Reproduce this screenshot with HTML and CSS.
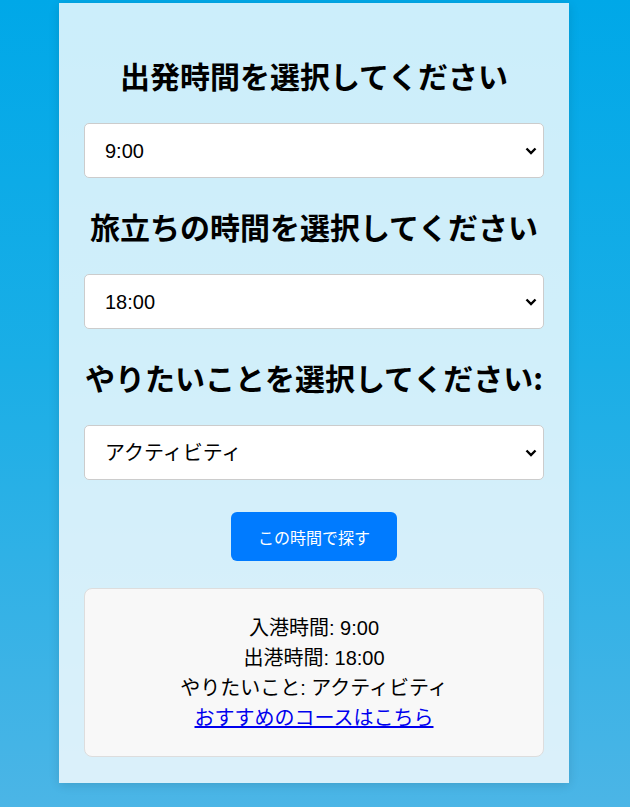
FILE: index.html
```html
<!DOCTYPE html>
<html lang="ja">
<head>
<meta charset="UTF-8">
<title>時間選択</title>
<link rel="stylesheet" href="styles.css">
</head>
<body>
<main class="card">
  <h2 class="title">出発時間を選択してください</h2>
  <select class="picker">
    <option>9:00</option>
  </select>
  <h2 class="title">旅立ちの時間を選択してください</h2>
  <select class="picker">
    <option>18:00</option>
  </select>
  <h2 class="title">やりたいことを選択してください:</h2>
  <select class="picker">
    <option>アクティビティ</option>
  </select>
  <div class="actions">
    <button class="search">この時間で探す</button>
  </div>
  <div class="result">
    <div class="line">入港時間: 9:00</div>
    <div class="line">出港時間: 18:00</div>
    <div class="line">やりたいこと: アクティビティ</div>
    <div class="line"><a class="link" href="#">おすすめのコースはこちら</a></div>
  </div>
</main>
</body>
</html>
```
FILE: styles.css
```css
html, body {
  margin: 0;
  padding: 0;
}
body {
  min-height: 807px;
  background: linear-gradient(to bottom, #00a8e8 0%, #1aaee6 45%, #4bb5e6 100%);
  font-family: "Liberation Sans", "Noto Sans CJK JP", sans-serif;
  color: #000;
}
.card {
  box-sizing: border-box;
  width: 510px;
  margin: 3px 0 0 calc(50% - 256px);
  padding: 24px 25px 26px;
  background: rgba(255, 255, 255, 0.8);
  box-shadow: 0 2px 10px rgba(0, 0, 0, 0.12);
  display: flex;
  flex-direction: column;
}
.title {
  margin: 30px 0;
  font-family: "Noto Sans CJK JP", sans-serif;
  font-size: 30px;
  font-weight: bold;
  line-height: 36px;
  text-align: center;
  white-space: nowrap;
}
.picker {
  -webkit-appearance: none;
  appearance: none;
  box-sizing: border-box;
  width: 100%;
  height: 55px;
  margin: 0;
  padding: 0 30px 0 20px;
  border: 1px solid #ccc;
  border-radius: 5px;
  background-color: #fff;
  background-image: url("data:image/svg+xml;utf8,<svg xmlns='http://www.w3.org/2000/svg' width='12' height='8' viewBox='0 0 12 8'><path d='M1.5 1.5 L6 6 L10.5 1.5' fill='none' stroke='black' stroke-width='2.4'/></svg>");
  background-repeat: no-repeat;
  background-position: right 6px center;
  font-family: "Liberation Sans", "Noto Sans CJK JP", sans-serif;
  font-size: 20px;
  color: #000;
}
.actions {
  display: flex;
  justify-content: center;
  margin: 32px 0 27px;
}
.search {
  height: 49px;
  padding: 0 27px;
  border: none;
  border-radius: 6px;
  background: #007bff;
  color: #fff;
  font-family: "Liberation Sans", "Noto Sans CJK JP", sans-serif;
  font-size: 16px;
  cursor: pointer;
}
.result {
  padding: 24px 20px 23px;
  border: 1px solid #ddd;
  border-radius: 8px;
  background: #f8f8f8;
  text-align: center;
  font-size: 20px;
  line-height: 30px;
}
.link {
  color: #0000ee;
  text-decoration: underline;
}
```
